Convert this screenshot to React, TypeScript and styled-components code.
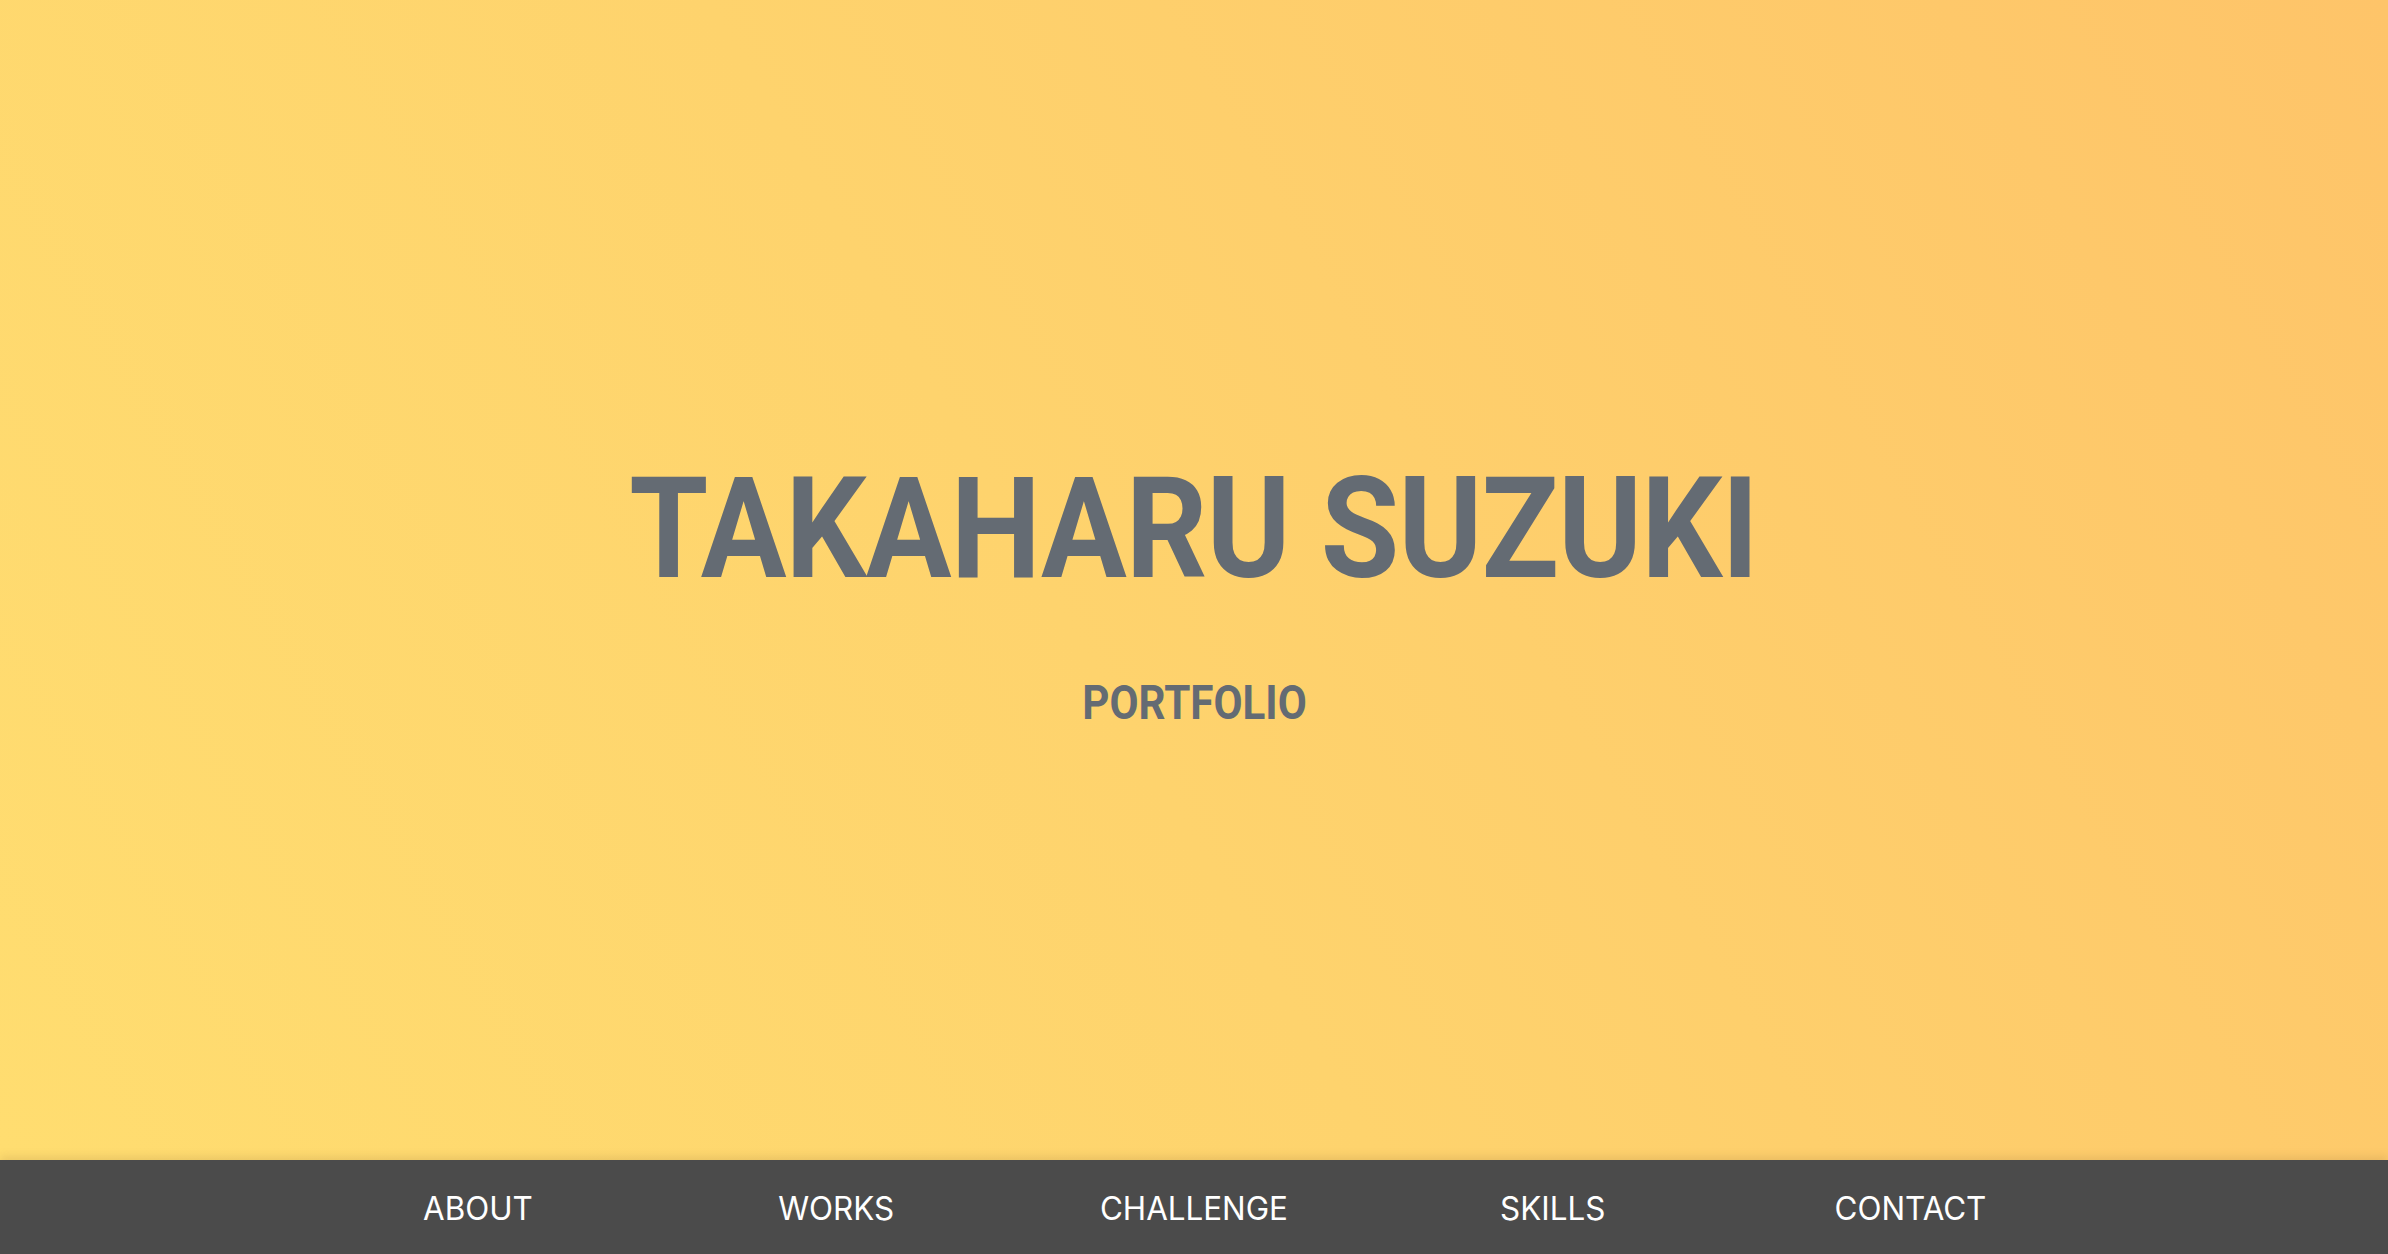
import React from "react";
import styled, { createGlobalStyle } from "styled-components";

const Global = createGlobalStyle`
  html, body { margin: 0; padding: 0; height: 100%; }
  body { font-family: Roboto, "Noto Sans", sans-serif; overflow: hidden; }
  #root { height: 100%; }
`;

const Page = styled.div`
  display: flex;
  flex-direction: column;
  height: 100vh;
`;

const Hero = styled.header`
  flex: 1;
  display: flex;
  flex-direction: column;
  align-items: center;
  justify-content: center;
  padding-top: 24px;
  background: linear-gradient(60deg, #ffdd70 0%, #fed36d 45%, #fec469 100%);
  color: #646b73;
`;

const Title = styled.h1`
  margin: 0;
  font-family: Roboto, sans-serif;
  font-weight: 700;
  font-size: 141px;
  line-height: 1;
  letter-spacing: -1px;
  transform: scaleX(0.905);
  white-space: nowrap;
`;

const Subtitle = styled.p`
  margin: 79px 0 0;
  font-family: Roboto, sans-serif;
  font-weight: 700;
  font-size: 49px;
  line-height: 1;
  transform: scaleX(0.86);
`;

const Nav = styled.nav`
  height: 94px;
  background: #4b4b4b;
  box-shadow: 0 -4px 8px rgba(150, 110, 60, 0.18);
  display: flex;
  justify-content: center;
  align-items: center;
  position: relative;
`;

const NavList = styled.ul`
  width: 75%;
  margin: 0;
  padding: 0;
  list-style: none;
  display: flex;
`;

const NavItem = styled.li`
  flex: 1;
  display: flex;
  justify-content: center;
`;

const NavLink = styled.a`
  color: #ffffff;
  text-decoration: none;
  font-family: Inter, "Liberation Sans", sans-serif;
  font-size: 32px;
  font-weight: 400;
  display: inline-block;
  transform: scaleX(0.98);
  margin-top: 2px;
`;

const items = ["ABOUT", "WORKS", "CHALLENGE", "SKILLS", "CONTACT"];

export default function App() {
  return (
    <Page>
      <Global />
      <Hero>
        <Title>TAKAHARU SUZUKI</Title>
        <Subtitle>PORTFOLIO</Subtitle>
      </Hero>
      <Nav>
        <NavList>
          {items.map((it) => (
            <NavItem key={it}>
              <NavLink href="#">{it}</NavLink>
            </NavItem>
          ))}
        </NavList>
      </Nav>
    </Page>
  );
}
